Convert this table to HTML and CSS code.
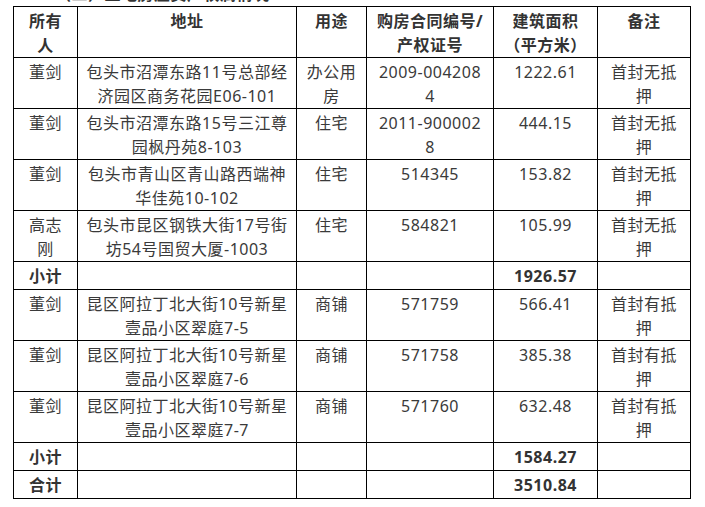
FILE: index.html
```html
<!DOCTYPE html>
<html lang="zh-CN">
<head>
<meta charset="utf-8">
<link rel="stylesheet" href="styles.css">
</head>
<body>
<div class="page">
  <div class="caption"><span class="caption-text">（二）土地房屋资产权属情况</span></div>
  <table class="assets">
    <colgroup>
      <col class="c-owner"><col class="c-addr"><col class="c-use"><col class="c-no"><col class="c-area"><col class="c-note">
    </colgroup>
    <thead>
      <tr>
        <th>所有人</th>
        <th>地址</th>
        <th>用途</th>
        <th>购房合同编号/产权证号</th>
        <th>建筑面积<br>（平方米）</th>
        <th>备注</th>
      </tr>
    </thead>
    <tbody>
      <tr><td>董剑</td><td>包头市沼潭东路11号总部经济园区商务花园E06-101</td><td>办公用房</td><td>2009-0042084</td><td>1222.61</td><td>首封无抵押</td></tr>
      <tr><td>董剑</td><td>包头市沼潭东路15号三江尊园枫丹苑8-103</td><td>住宅</td><td>2011-9000028</td><td>444.15</td><td>首封无抵押</td></tr>
      <tr><td>董剑</td><td>包头市青山区青山路西端神华佳苑10-102</td><td>住宅</td><td>514345</td><td>153.82</td><td>首封无抵押</td></tr>
      <tr><td>高志刚</td><td>包头市昆区钢铁大街17号街坊54号国贸大厦-1003</td><td>住宅</td><td>584821</td><td>105.99</td><td>首封无抵押</td></tr>
      <tr class="sum"><td>小计</td><td></td><td></td><td></td><td>1926.57</td><td></td></tr>
      <tr><td>董剑</td><td>昆区阿拉丁北大街10号新星壹品小区翠庭7-5</td><td>商铺</td><td>571759</td><td>566.41</td><td>首封有抵押</td></tr>
      <tr><td>董剑</td><td>昆区阿拉丁北大街10号新星壹品小区翠庭7-6</td><td>商铺</td><td>571758</td><td>385.38</td><td>首封有抵押</td></tr>
      <tr><td>董剑</td><td>昆区阿拉丁北大街10号新星壹品小区翠庭7-7</td><td>商铺</td><td>571760</td><td>632.48</td><td>首封有抵押</td></tr>
      <tr class="sum"><td>小计</td><td></td><td></td><td></td><td>1584.27</td><td></td></tr>
      <tr class="sum"><td>合计</td><td></td><td></td><td></td><td>3510.84</td><td></td></tr>
    </tbody>
  </table>
</div>
</body>
</html>
```
FILE: styles.css
```css
html, body {
  margin: 0;
  padding: 0;
  background: #fff;
}
.page {
  padding-left: 13px;
  font-family: "Noto Sans", "Noto Sans CJK SC", sans-serif;
  font-size: 16px;
  letter-spacing: 0.5px;
  color: #3a3a3a;
}
.caption {
  height: 6px;
  overflow: hidden;
}
.caption-text {
  display: block;
  margin-top: -16px;
  margin-left: 42px;
  line-height: 20px;
  font-weight: bold;
  color: #333;
}
.assets {
  border-collapse: collapse;
  table-layout: fixed;
  width: 677px;
}
.c-owner { width: 64px; }
.c-addr { width: 219px; }
.c-use { width: 70px; }
.c-no { width: 127px; }
.c-area { width: 104px; }
.c-note { width: 93px; }
.assets th,
.assets td {
  border: 1px solid #000;
  padding: 2px 8px 0;
  line-height: 24px;
  height: 25px;
  text-align: center;
  vertical-align: top;
  word-break: break-all;
}
.assets th {
  font-weight: bold;
  color: #333;
}
.assets .sum td {
  font-weight: bold;
  color: #333;
}
```
